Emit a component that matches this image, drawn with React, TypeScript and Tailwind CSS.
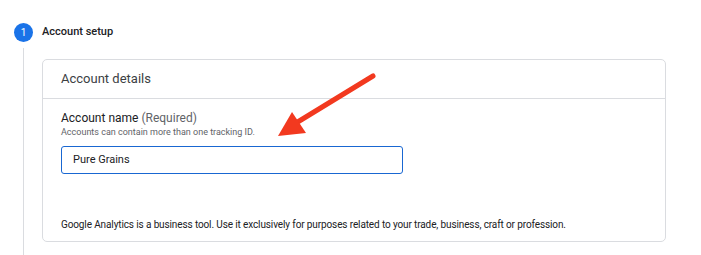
export default function App() {
  return (
    <div className="relative h-[255px] w-[701px] bg-white font-['Roboto',sans-serif] text-[#202124]">
      <div className="flex items-center pt-[23px]">
        <div className="ml-[14px] flex h-[19px] w-[19px] items-center justify-center rounded-full bg-[#1a73e8] text-[10px] text-white">
          1
        </div>
        <span className="ml-[9px] text-[11px] font-medium text-[#202124]">Account setup</span>
      </div>
      <div className="flex">
        <div className="ml-[23px] mt-[6px] h-[210px] w-px bg-[#dadce0]" />
        <div className="ml-[18px] mt-[17px] w-[624px] self-start rounded-[5px] border border-[#dadce0]">
          <div className="flex h-[39px] items-center border-b border-[#dadce0] px-[18px] text-[13px] text-[#3c4043]">
            Account details
          </div>
          <div className="px-[18px] pb-[10px] pt-[12px]">
            <div className="h-[14px] text-[12px] leading-[14px] text-[#202124]">
              Account name <span className="text-[#5f6368]">(Required)</span>
            </div>
            <div className="mt-[2px] h-[11px] text-[9px] leading-[11px] text-[#5f6368]">
              Accounts can contain more than one tracking ID.
            </div>
            <div className="mt-[8px] flex h-[28px] w-[342px] items-center rounded-[3px] border border-[#1967d2] px-[11px] text-[11px] text-[#202124]">
              Pure Grains
            </div>
            <div className="mt-[45px] h-[12px] text-[10px] leading-[12px] tracking-[-0.12px] text-[#202124]">
              Google Analytics is a business tool. Use it exclusively for purposes related to your trade, business, craft or profession.
            </div>
          </div>
        </div>
      </div>
      <svg className="absolute left-0 top-0" width="701" height="255" viewBox="0 0 701 255">
        <line x1="373" y1="76" x2="296" y2="123" stroke="#f2391f" strokeWidth="5" strokeLinecap="round" />
        <polygon points="278,136 292,112 306,133" fill="#f2391f" />
      </svg>
    </div>
  );
}
